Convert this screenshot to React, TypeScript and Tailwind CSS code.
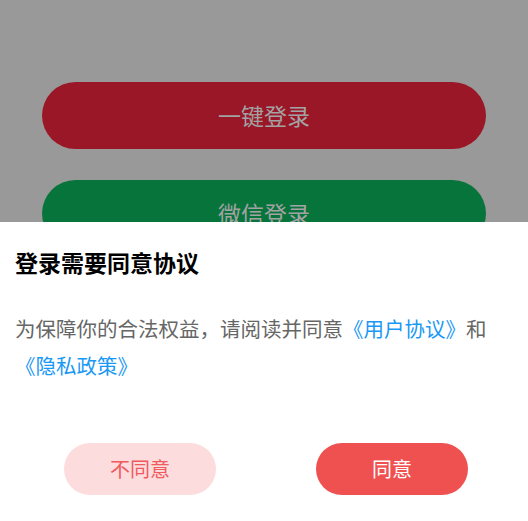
import * as React from "react";

const font = { fontFamily: "'Noto Sans CJK SC', 'Noto Sans', sans-serif" };

export default function App() {
    return (
        <div className="relative h-[521px] w-[528px] overflow-hidden bg-[#999999]" style={font}>
            {/* Login buttons behind the mask */}
            <div className="flex flex-col gap-[31px] px-[42px] pt-[82px]">
                <div className="flex h-[67px] items-center justify-center rounded-full bg-[#9a1728] text-[23px] text-[#a3a3a3]">
                    一键登录
                </div>
                <div className="flex h-[67px] items-center justify-center rounded-full bg-[#06743b] text-[23px] text-[#a3a3a3]">
                    微信登录
                </div>
            </div>

            {/* Agreement sheet */}
            <div className="absolute inset-x-0 bottom-0 flex h-[299px] flex-col bg-white px-[15px] pt-[24px]">
                <h2 className="text-[23px] font-bold leading-[32px] text-black">登录需要同意协议</h2>
                <p className="mt-[32px] text-[20.5px] leading-[37px] text-[#666666]">
                    为保障你的合法权益，请阅读并同意<span className="text-[#1a98f5]">《用户协议》</span>和
                    <span className="whitespace-nowrap text-[#1a98f5]">《隐私政策》</span>
                </p>
                <div className="mt-[59px] flex gap-[100px] pl-[49px]">
                    <button className="h-[52px] w-[152px] rounded-full bg-[#fddcdd] text-[20px] text-[#ef5a5e]">
                        不同意
                    </button>
                    <button className="h-[52px] w-[152px] rounded-full bg-[#ef5151] text-[20px] text-white">
                        同意
                    </button>
                </div>
            </div>
        </div>
    );
}
